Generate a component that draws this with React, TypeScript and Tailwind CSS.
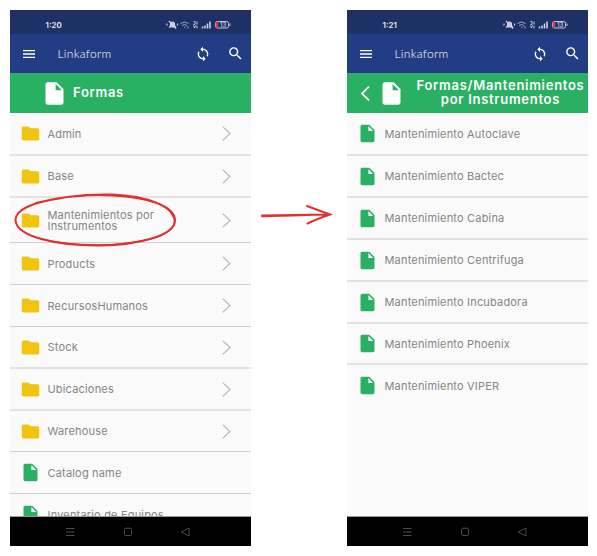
import React from 'react';
import { MdMenu, MdSync, MdSearch, MdFolder, MdInsertDriveFile } from 'react-icons/md';

type Item = { name: React.ReactNode; folder?: boolean; height: string; line: string };

const crisp = 'border-b border-[#cfcfcf]';
const soft = 'border-b-2 border-[#e3e3e3]';

const forms: Item[] = [
  { name: 'Admin', folder: true, height: 'h-[43px]', line: soft },
  { name: 'Base', folder: true, height: 'h-[42px]', line: soft },
  { name: <>Mantenimientos por<br />Instrumentos</>, folder: true, height: 'h-[45px]', line: crisp },
  { name: 'Products', folder: true, height: 'h-[42px]', line: crisp },
  { name: 'RecursosHumanos', folder: true, height: 'h-[42px]', line: crisp },
  { name: 'Stock', folder: true, height: 'h-[42px]', line: soft },
  { name: 'Ubicaciones', folder: true, height: 'h-[42px]', line: soft },
  { name: 'Warehouse', folder: true, height: 'h-[41px]', line: crisp },
  { name: 'Catalog name', height: 'h-[42px]', line: crisp },
  { name: 'Inventario de Equipos', height: 'h-[42px]', line: crisp },
];

const maintenance: Item[] = [
  { name: 'Mantenimiento Autoclave', height: 'h-[43px]', line: soft },
  { name: 'Mantenimiento Bactec', height: 'h-[42px]', line: soft },
  { name: 'Mantenimiento Cabina', height: 'h-[42px]', line: soft },
  { name: 'Mantenimiento Centrifuga', height: 'h-[42px]', line: soft },
  { name: 'Mantenimiento Incubadora', height: 'h-[42px]', line: soft },
  { name: 'Mantenimiento Phoenix', height: 'h-[41px]', line: soft },
  { name: 'Mantenimiento VIPER', height: 'h-[42px]', line: 'border-b border-transparent' },
];

function StatusIcons() {
  return (
    <svg width="66" height="10" viewBox="0 0 66 10" fill="none" stroke="#d5daea">
      <path d="M3.5 7 4.5 5.5V4a2 2 0 0 1 4 0v1.5L9.5 7zM3 1l7 7.5M1 3.5v2M11.500 3.500v2" strokeWidth="1.100" fill="#b3bbd5" />
      <path d="M14.500 3.500q4-3 8 0M16 5.500q2.500-1.800 5 0M18 7.300h1.500M22 6v2.500" strokeWidth=".9" opacity=".75" />
      <path d="M27.500 1.500h1.500v3h-1.500M31 1.500v3M27.500 5.500l1 2.500 1-2.500M31 5.500v3" strokeWidth=".9" />
      <path d="M36.500 6.500v2M39 5.500v3M41.500 3.500v5M44 1.500v7" strokeWidth="1.500" />
      <rect x="49.500" y="1.500" width="13" height="6.500" rx="1.800" strokeWidth=".9" />
      <path d="M50 2h2v5.500h-2z" fill="#e0394a" stroke="#e0394a" strokeWidth=".7" />
      <path d="M64 3.500v2.500" strokeWidth=".9" />
      <text x="54" y="7" fontSize="6" fontFamily="Inter, sans-serif" fill="#e0e4f0" stroke="none">13</text>
    </svg>
  );
}

function Phone({ time, items, children }: { time: string; items: Item[]; children: React.ReactNode }) {
  return (
    <section className="flex h-[536px] w-[241px] shrink-0 flex-col overflow-hidden bg-[#fafafa]">
      <div className="flex h-[24px] shrink-0 items-center justify-between bg-[#1d3166] pr-[19px] pl-[35.500px] pt-[6px]">
        <span className="text-[8px] leading-none font-semibold text-[#e4e8f2]">{time}</span>
        <StatusIcons />
      </div>
      <header className="flex h-[39px] shrink-0 items-center bg-[#233d85] pl-[10.500px] text-white">
        <MdMenu size={16} />
        <span className="ml-[21px] w-[60px] font-['Lato'] text-[12px] font-light tracking-[0.3px] whitespace-nowrap">Linkaform</span>
        <MdSync size={16} className="ml-[77.500px]" />
        <MdSearch size={17} className="ml-[15.500px]" />
      </header>
      <div className="flex h-[40px] shrink-0 items-center bg-[#29b063] font-semibold text-white">{children}</div>
      <ul className="min-h-0 flex-1 overflow-hidden border-b border-[#9a9a9a]">
        {items.map((item, i) => (
          <li key={i} className={`flex items-center pl-[10px] ${item.height} ${item.line}`}>
            {item.folder ? <MdFolder size={21} color="#f1c40f" /> : <MdInsertDriveFile size={21} color="#29b063" />}
            <span className="ml-[6.500px] flex-1 pt-px text-[11px] leading-[11px] tracking-[0.18px] whitespace-nowrap">{item.name}</span>
            {item.folder && (
              <svg className="mr-[20px]" width="9" height="15" viewBox="0 0 9 15" fill="none" stroke="#b5b5b5" strokeWidth="1.100">
                <path d="M.7.700 8 7.500.7 14.300" />
              </svg>
            )}
          </li>
        ))}
      </ul>
      <nav className="flex h-[29px] shrink-0 items-center bg-black pl-[55px]">
        <svg width="126" height="10" viewBox="0 0 126 10" fill="none" stroke="#4b4b4b" strokeWidth="1">
          <path d="M1 1.500h8.500M1 5h8.500M1 8.500h8.500" />
          <rect x="59.500" y="1.200" width="7" height="7.300" rx="1.300" />
          <path d="M124 1v8l-7.500-4z" />
        </svg>
      </nav>
    </section>
  );
}

export default function App() {
  return (
    <main className="relative flex h-[556px] w-[597px] gap-[96px] overflow-hidden bg-white p-[10px] font-['Inter',sans-serif] text-[#858585]">
      <Phone time="1:20" items={forms}>
        <MdInsertDriveFile size={27} className="ml-[31px]" />
        <h1 className="mb-[2px] ml-[5px] text-[13px] leading-none tracking-[0.7px]">Formas</h1>
      </Phone>
      <Phone time="1:21" items={maintenance}>
        <svg className="ml-[13px]" width="10" height="15" viewBox="0 0 10 15" fill="none" stroke="white" strokeWidth="1.800">
          <path d="M9 .7 2 7.500l7 6.800" />
        </svg>
        <MdInsertDriveFile size={27} className="ml-[8px]" />
        <h1 className="mb-[3px] flex-1 pl-[8px] text-center text-[13px] leading-[14px] tracking-[0.72px] whitespace-nowrap">
          Formas/Mantenimientos<br />por Instrumentos
        </h1>
      </Phone>
      <svg className="pointer-events-none absolute inset-0" width="597" height="556" viewBox="0 0 597 556" fill="none" stroke="#e03131" strokeLinecap="round">
        <path d="M36 203C62 196 88 194 112 194.500C146 196 175 206 175 220C175 236 138 245 100 245.500C58 246 16 237 15.500 220C15.500 210 32 202 62 198" strokeWidth="2" />
        <path d="M74 196.500C110 192.500 148 198 163 206C172 211 176 219 174 225C168 238 132 245.500 94 245C60 244 32 239 20 229" strokeWidth="1.600" />
        <path d="M262 216.300C284 216 306 215 329 214.300M262 215.400 329 214.600M307 206C315 209 323 212 330 214.500C322 217 315 220 307.500 223.500" strokeWidth="2" />
      </svg>
    </main>
  );
}
